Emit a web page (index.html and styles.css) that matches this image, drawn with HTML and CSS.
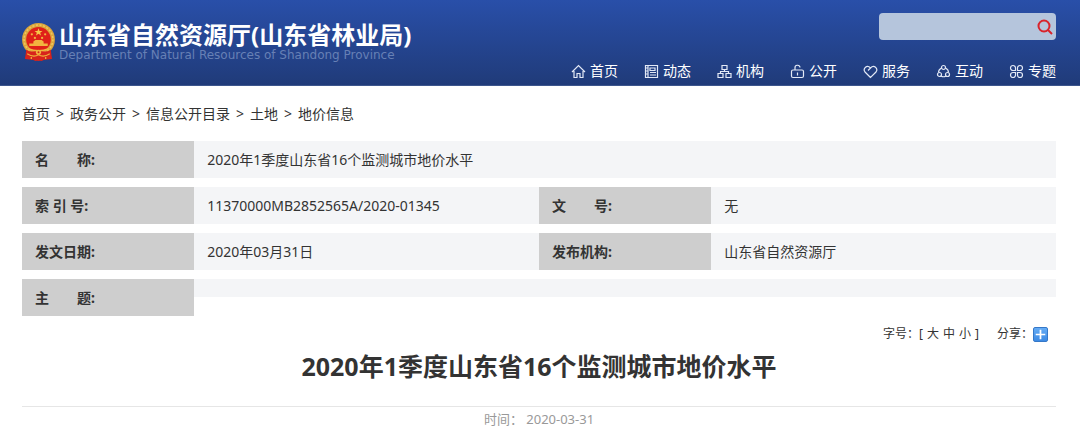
FILE: index.html
```html
<!DOCTYPE html>
<html lang="zh-CN">
<head>
<meta charset="utf-8">
<meta name="viewport" content="width=device-width, initial-scale=1">
<title>2020年1季度山东省16个监测城市地价水平</title>
<link rel="stylesheet" href="styles.css">
</head>
<body>
<header class="site-header">
  <a class="brand" href="#">
    <svg class="emblem" viewBox="0 0 32 37" aria-hidden="true">
      <path fill="#d8231c" d="M5 26 27 26 29 35 22 35.500 19 37 16 36 13 37 10 35.500 3 35Z"/>
      <circle cx="16" cy="16" r="16" fill="#dba53c"/>
      <circle cx="16" cy="16" r="14" fill="none" stroke="#f1c65d" stroke-width="1.500" stroke-dasharray="2 1.500"/>
      <circle cx="16" cy="16" r="12" fill="#df2119"/>
      <path fill="#f5c84a" d="m16 5 1 2.700h2.900l-2.300 1.700.9 2.800L16 10.500l-2.500 1.700.9-2.800-2.300-1.700H15Z"/>
      <g fill="#f2b53f"><circle cx="9.500" cy="11" r="1.100"/><circle cx="22.500" cy="11" r="1.100"/><circle cx="12.500" cy="14.500" r="1.100"/><circle cx="19.500" cy="14.500" r="1.100"/>
      <path d="m11 18 2-1.500h6l2 1.500v2h4v2.500H7V20h4Z"/></g>
      <path fill="#d8231c" d="M4 26q5 3 12 1 7 2 12-1l1 9-7 .5L16 37l-6-1.500L3 35Z"/>
      <path d="M6 25q10 4 20 0" stroke="#f0b63f" stroke-width="1.500" fill="none"/>
      <circle cx="16" cy="28.500" r="2.500" fill="#f0b63f"/><circle cx="16" cy="28.500" r="1" fill="#d8231c"/>
      <path d="M5 30q6 4 11 1 5 3 11-1M9 33v2m14-2v2" stroke="#eeb13d" stroke-width="1.200" fill="none"/>
    </svg>
    <span class="brand-text">
      <span class="brand-name">山东省自然资源厅(山东省林业局)</span>
      <span class="brand-en">Department of Natural Resources of Shandong Province</span>
    </span>
  </a>
  <div class="header-tools">
    <form class="search" role="search">
      <input class="search-input" type="text" aria-label="搜索">
      <button class="search-button" type="button" aria-label="搜索">
        <svg class="search-icon" viewBox="0 0 16 16"><circle cx="7" cy="7" r="5.500"/><path d="m11 11 4 4"/></svg>
      </button>
    </form>
    <nav class="nav" aria-label="主导航">
      <a class="nav-link" href="#"><svg class="nav-icon" viewBox="0 0 15 15"><path d="M3 7v6.500h3V9.500h3v4h3V7M1 8l6.500-6.500L14 8"/></svg>首页</a>
      <a class="nav-link" href="#"><svg class="nav-icon" viewBox="0 0 15 15"><path d="M1.500 1.500h12v12h-12ZM4 1.500v12M6 4h5v2.500H6ZM6 8.500h6M6 11h6M1.500 4H4M1.500 7H4M1.500 10H4"/></svg>动态</a>
      <a class="nav-link" href="#"><svg class="nav-icon" viewBox="0 0 15 15"><path d="M5 1.500h5v4H5ZM1 9.500h5v4H1ZM9 9.500h5v4H9ZM7.500 5.500v2M3.500 9.500v-2h8v2"/></svg>机构</a>
      <a class="nav-link" href="#"><svg class="nav-icon" viewBox="0 0 15 15"><path d="M3 6h9q1.500 0 1.500 1.500v4.500q0 1.500-1.500 1.500H3Q1.500 13.500 1.500 12V7.500Q1.500 6 3 6ZM5 6V4a2.500 2.500 0 0 1 5-.5M7.500 8.500v3"/></svg>公开</a>
      <a class="nav-link" href="#"><svg class="nav-icon" viewBox="0 0 15 15"><path d="M7.500 13.500 2 8C-.5 4.500 4 0 7.500 4 11 0 15.500 4.500 13 8ZM7.500 4 5 6.500"/></svg>服务</a>
      <a class="nav-link" href="#"><svg class="nav-icon" viewBox="0 0 15 15"><circle cx="7.500" cy="3.500" r="2"/><circle cx="3.500" cy="10.500" r="2"/><circle cx="11.500" cy="10.500" r="2"/><path d="M5.500 4Q2.500 5.500 2.500 8.500M9.500 4q3 1.500 3 4.500M5 12q2.500 1.500 5 0"/></svg>互动</a>
      <a class="nav-link" href="#"><svg class="nav-icon" viewBox="0 0 15 15"><path d="M6.500 6.500H4A2.500 2.500 0 1 1 6.500 4ZM8.500 6.500V4A2.500 2.500 0 1 1 11 6.500ZM6.500 8.500V11A2.500 2.500 0 1 1 4 8.500ZM8.500 8.500H11A2.500 2.500 0 1 1 8.500 11Z"/></svg>专题</a>
    </nav>
  </div>
</header>

<main class="page">
  <nav class="crumbs" aria-label="当前位置">
    <a class="crumb" href="#">首页</a><span>&gt;</span>
    <a class="crumb" href="#">政务公开</a><span>&gt;</span>
    <a class="crumb" href="#">信息公开目录</a><span>&gt;</span>
    <a class="crumb" href="#">土地</a><span>&gt;</span>
    <a class="crumb" href="#">地价信息</a>
  </nav>

  <table class="info">
    <colgroup><col class="col-label"><col class="col-value"><col class="col-label"><col class="col-value"></colgroup>
    <tbody>
      <tr><th scope="row">名　　称:</th><td colspan="3">2020年1季度山东省16个监测城市地价水平</td></tr>
      <tr><th scope="row">索 引 号:</th><td>11370000MB2852565A/2020-01345</td><th scope="row">文　　号:</th><td>无</td></tr>
      <tr><th scope="row">发文日期:</th><td>2020年03月31日</td><th scope="row">发布机构:</th><td>山东省自然资源厅</td></tr>
      <tr><th scope="row">主　　题:</th><td class="empty" colspan="3"><div class="empty-value"></div></td></tr>
    </tbody>
  </table>

  <div class="tools">
    <div class="font-size"><span>字号：[</span><button class="size-button" type="button">大</button><button class="size-button" type="button">中</button><button class="size-button" type="button">小</button><span>]</span></div>
    <div class="share">分享：<button class="share-button" type="button" aria-label="分享"><svg class="share-icon" viewBox="0 0 15 15"><path d="M7.500 2v11M2 7.500h11"/></svg></button></div>
  </div>

  <article>
    <h1 class="title">2020年1季度山东省16个监测城市地价水平</h1>
    <p class="meta">时间： 2020-03-31</p>
  </article>
</main>
</body>
</html>
```
FILE: styles.css
```css
* { box-sizing: border-box; }
body {
  margin: 0;
  background: #fff;
  color: #333;
  font: 14px/20px "Noto Sans", "Noto Sans CJK SC", sans-serif;
}
a { color: inherit; text-decoration: none; }
button { padding: 0; border: 0; background: none; color: inherit; font: inherit; cursor: pointer; }

.site-header {
  display: flex;
  justify-content: space-between;
  padding: 13px 24px 4px 22px;
  border-bottom: 1px solid #3d568d;
  background: linear-gradient(#294fa9, #203b79);
  color: #fff;
}
.brand { display: flex; align-items: center; align-self: flex-start; gap: 4px; padding-top: 9px; }
.emblem { width: 33px; height: 38px; }
.brand-text { display: flex; flex-direction: column; }
.brand-name { font-size: 24px; line-height: 26px; font-weight: 700; }
.brand-en { color: #6780b5; font: 12px/14px "DejaVu Sans", sans-serif; }

.header-tools { display: flex; flex-direction: column; align-items: flex-end; justify-content: space-between; gap: 21px; }
.search { display: flex; width: 177px; height: 27px; border-radius: 4px; background: #b5c5dc; }
.search-input { flex: 1; min-width: 0; padding: 0 8px; border: 0; background: transparent; font: inherit; outline: 0; }
.search-button { display: flex; align-items: center; justify-content: center; width: 22px; }
.search-icon { width: 16px; height: 16px; fill: none; stroke: #d9232b; stroke-width: 2; }
.nav { display: flex; gap: 26px; }
.nav-link { display: flex; align-items: center; gap: 4px; }
.nav-icon { width: 15px; height: 15px; fill: none; stroke: #e3e9f6; stroke-width: 1.2; }

.page { padding: 18px 24px 16px 22px; }
.crumbs { display: flex; gap: 6px; }

.info { width: 100%; margin-top: 8px; border-spacing: 0 9px; table-layout: fixed; }
.col-label { width: 16.65%; }
.col-value { width: 33.35%; }
.info th, .info td { padding: 9px 13px 8px; text-align: left; }
.info th { background: #cecece; font-weight: 700; }
.info td { background: #f4f5f7; }
.info .empty { padding: 0; background: none; vertical-align: top; }
.empty-value { height: 18px; background: #f4f5f7; }

.tools { display: flex; justify-content: flex-end; gap: 18px; padding-right: 8px; font-size: 12px; line-height: 18px; }
.font-size { display: flex; gap: 4px; }
.share { display: flex; align-items: center; }
.share-button { display: flex; align-items: center; justify-content: center; width: 15px; height: 15px; border: 1px solid #3578c8; border-radius: 2px; background: linear-gradient(#65acf5, #3c8ae4); }
.share-icon { width: 13px; height: 13px; stroke: #fff; stroke-width: 2; }

.title { margin: 5px 0 0; padding-bottom: 22px; border-bottom: 1px solid #e6e6e6; font-size: 25px; line-height: 36px; font-weight: 700; text-align: center; }
.meta { margin: 2px 0 0; color: #999; font-size: 13px; line-height: 20px; text-align: center; }
```
